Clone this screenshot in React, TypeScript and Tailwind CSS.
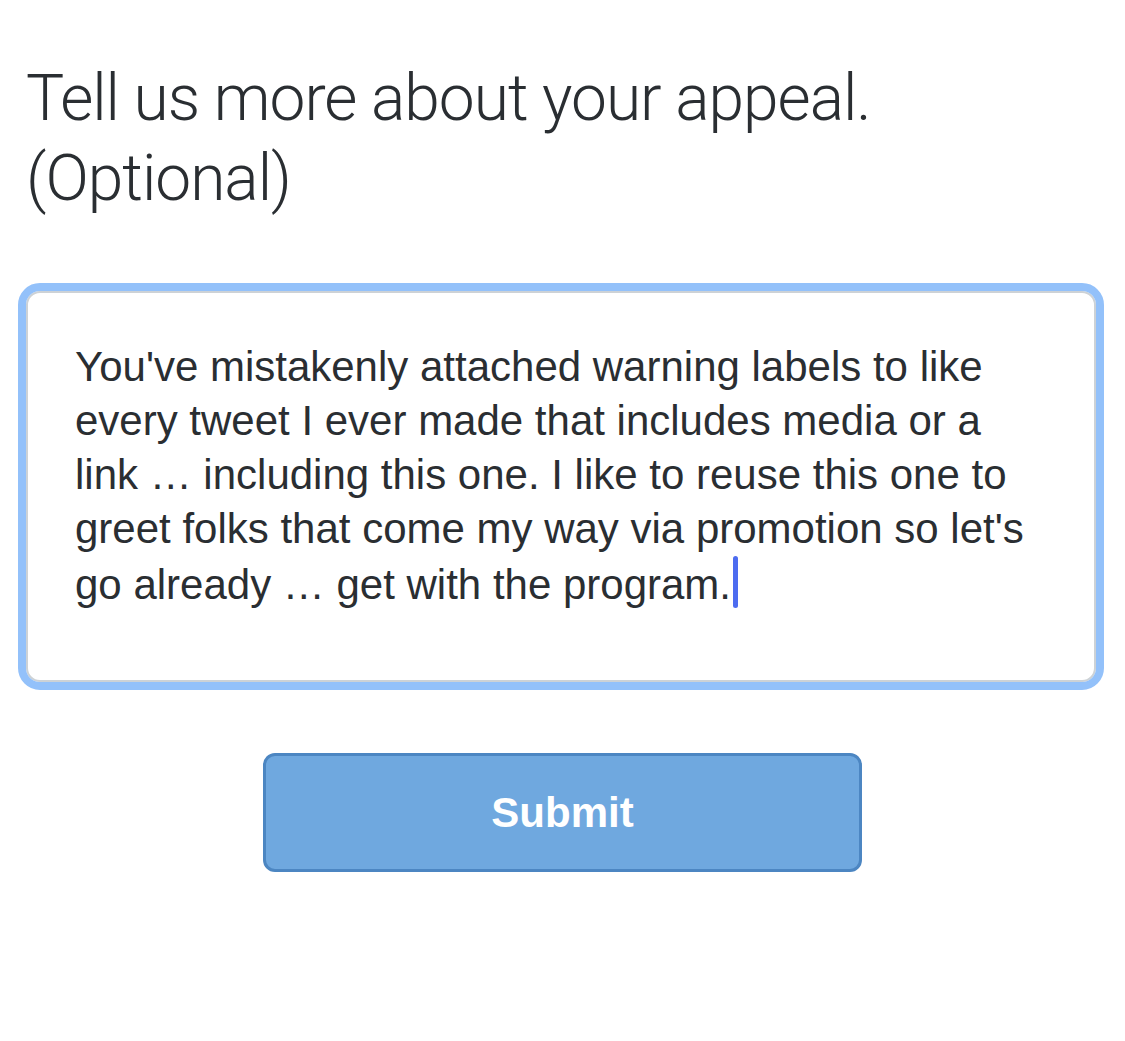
export default function App() {
  return (
    <div className="min-h-[1041px] bg-white pl-[26px] pr-[29px] pt-[59px] font-['Liberation_Sans',Arial,sans-serif] text-[#2a2e32]">
      <h1 className="font-['Roboto','Liberation_Sans',sans-serif] text-[64px] font-light leading-[80px] tracking-[-1px]">
        Tell us more about your appeal.
        <br />
        (Optional)
      </h1>

      {/* focused textarea */}
      <div className="mt-[72px] h-[391px] rounded-[14px] border-2 border-[#cdd2d6] pt-[47px] pl-[47px] pr-[54px] text-[42px] leading-[54px] outline-[8px] outline-solid outline-[#93c1fa] outline-offset-0">
        You've mistakenly attached warning labels to like every tweet I ever made that includes media or a link … including this one. I like to reuse this one to greet folks that come my way via promotion so let's go already … get with the program.
        <span className="ml-[2px] inline-block h-[52px] w-[5px] rounded-full bg-[#4d6cf0] align-[-9px]" />
      </div>

      <div className="mt-[71px] flex justify-center pl-[3px]">
        <button className="h-[119px] w-[599px] rounded-[12px] border-[3px] border-[#4c86c2] bg-[#6fa8df] text-[42px] font-bold text-white">
          Submit
        </button>
      </div>
    </div>
  );
}
